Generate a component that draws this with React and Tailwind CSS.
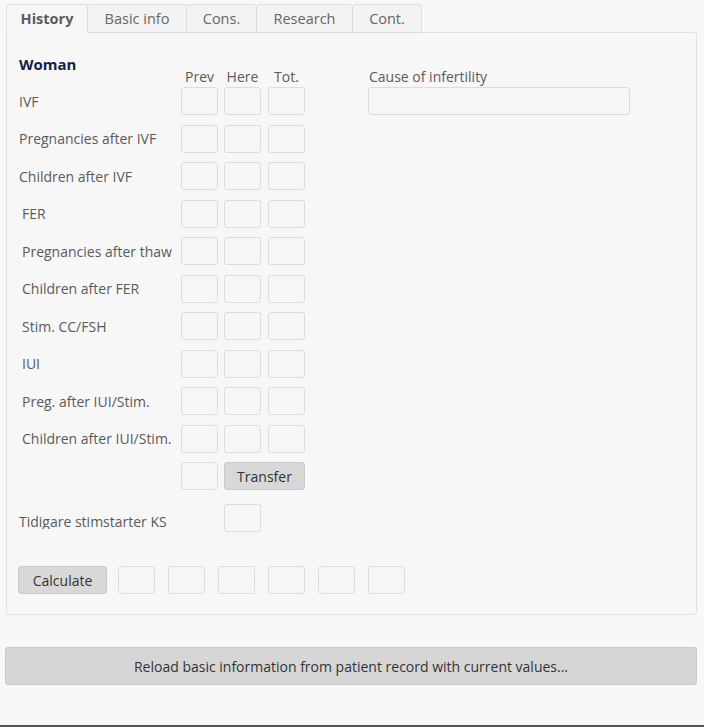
import React from "react";

const font = { fontFamily: '"Open Sans", "Noto Sans", sans-serif' };

function Box({ className = "" }) {
  return (
    <div
      className={
        "h-[28px] w-[37px] shrink-0 rounded-[3px] border border-[#dcdcdc] bg-[#f7f7f7] " +
        className
      }
    />
  );
}

function Triple() {
  return (
    <div className="flex">
      <Box />
      <Box className="ml-[6px]" />
      <Box className="ml-[7px]" />
    </div>
  );
}

const rows = [
  ["IVF", false],
  ["Pregnancies after IVF", false],
  ["Children after IVF", false],
  ["FER", true],
  ["Pregnancies after thaw", true],
  ["Children after FER", true],
  ["Stim. CC/FSH", true],
  ["IUI", true],
  ["Preg. after IUI/Stim.", true],
  ["Children after IUI/Stim.", true],
];

const tabs = [
  ["History", "w-[82px]", true],
  ["Basic info", "w-[100px]", false],
  ["Cons.", "w-[71px]", false],
  ["Research", "w-[97px]", false],
  ["Cont.", "w-[70px]", false],
];

export default function App() {
  return (
    <div
      className="relative h-[727px] w-[704px] overflow-hidden border-b-2 border-[#555] bg-[#f8f8f8] text-[14px] text-[#5a5a5a]"
      style={font}
    >
      {/* Tabs */}
      <div className="flex pl-[6px] pt-[4px]">
        {tabs.map(([t, w, active], i) => (
          <div
            key={t}
            className={
              "relative z-10 flex h-[29px] items-center justify-center rounded-t-[3px] border border-[#dedede] text-[14.5px] " +
              w +
              (i > 0 ? " -ml-px" : "") +
              (active
                ? " border-b-[#f7f7f7] bg-[#f7f7f7] font-bold text-[#5c5c5c]"
                : " bg-[#f3f3f3] text-[#666]")
            }
          >
            {t}
          </div>
        ))}
      </div>

      {/* Panel */}
      <div className="-mt-px ml-[6px] h-[583px] w-[691px] rounded-b-[3px] rounded-tr-[3px] border border-[#e0e0e0] bg-[#f7f7f7] pl-[12px] pt-[21px]">
        <div className="flex flex-col">
          <div className="flex">
            {/* Rows column */}
            <div className="flex flex-col">
              {/* header row */}
              <div className="flex h-[33px]">
                <div className="w-[162px] text-[15px] font-bold leading-[20px] text-[#141e4a]">
                  Woman
                </div>
                <div className="flex items-end pb-[1px] text-[14px] leading-[18px] text-[#5a5a5a]">
                  <span className="flex w-[37px] justify-center whitespace-nowrap">Prev</span>
                  <span className="ml-[6px] flex w-[37px] justify-center whitespace-nowrap">Here</span>
                  <span className="ml-[7px] flex w-[37px] justify-center whitespace-nowrap">Tot.</span>
                </div>
              </div>
              <div className="flex flex-col gap-[9.5px]">
                {rows.map(([label, indent]) => (
                  <div key={label} className="flex h-[28px] items-center">
                    <div
                      className={
                        "w-[162px] whitespace-nowrap " + (indent ? "pl-[3px]" : "")
                      }
                    >
                      {label}
                    </div>
                    <Triple />
                  </div>
                ))}
                <div className="flex h-[28px] items-center">
                  <div className="w-[162px]" />
                  <Box />
                  <button className="ml-[6px] h-[28px] w-[81px] rounded-[3px] border border-[#cacaca] bg-[#d8d8d8] text-[14px] text-[#333]">
                    Transfer
                  </button>
                </div>
              </div>
            </div>

            {/* Cause of infertility */}
            <div className="ml-[63px] flex flex-col">
              <div className="flex h-[33px] items-end pb-[1px] leading-[18px]">
                <span className="ml-[1px]">Cause of infertility</span>
              </div>
              <div className="h-[28px] w-[262px] rounded-[3px] border border-[#dcdcdc] bg-[#f7f7f7]" />
            </div>
          </div>

          {/* Tidigare row */}
          <div className="mt-[14px] flex h-[28px]">
            <div className="h-[25px] w-[205px] overflow-hidden whitespace-nowrap pt-[8px] leading-[20px]">
              Tidigare stimstarter KS
            </div>
            <Box />
          </div>

          {/* Calculate row */}
          <div className="mt-[34px] flex h-[28px] items-center">
            <button className="-ml-px h-[28px] w-[89px] rounded-[3px] border border-[#cacaca] bg-[#d8d8d8] text-[14px] text-[#333]">
              Calculate
            </button>
            <div className="ml-[11px] flex gap-[13px]">
              <Box />
              <Box />
              <Box />
              <Box />
              <Box />
              <Box />
            </div>
          </div>
        </div>
      </div>

      {/* Reload button */}
      <div className="mt-[32px] px-[5px]">
        <button className="h-[38px] w-[692px] rounded-[3px] border border-[#c8c8c8] bg-[#d6d6d6] text-[14px] text-[#333]">
          Reload basic information from patient record with current values...
        </button>
      </div>
    </div>
  );
}
